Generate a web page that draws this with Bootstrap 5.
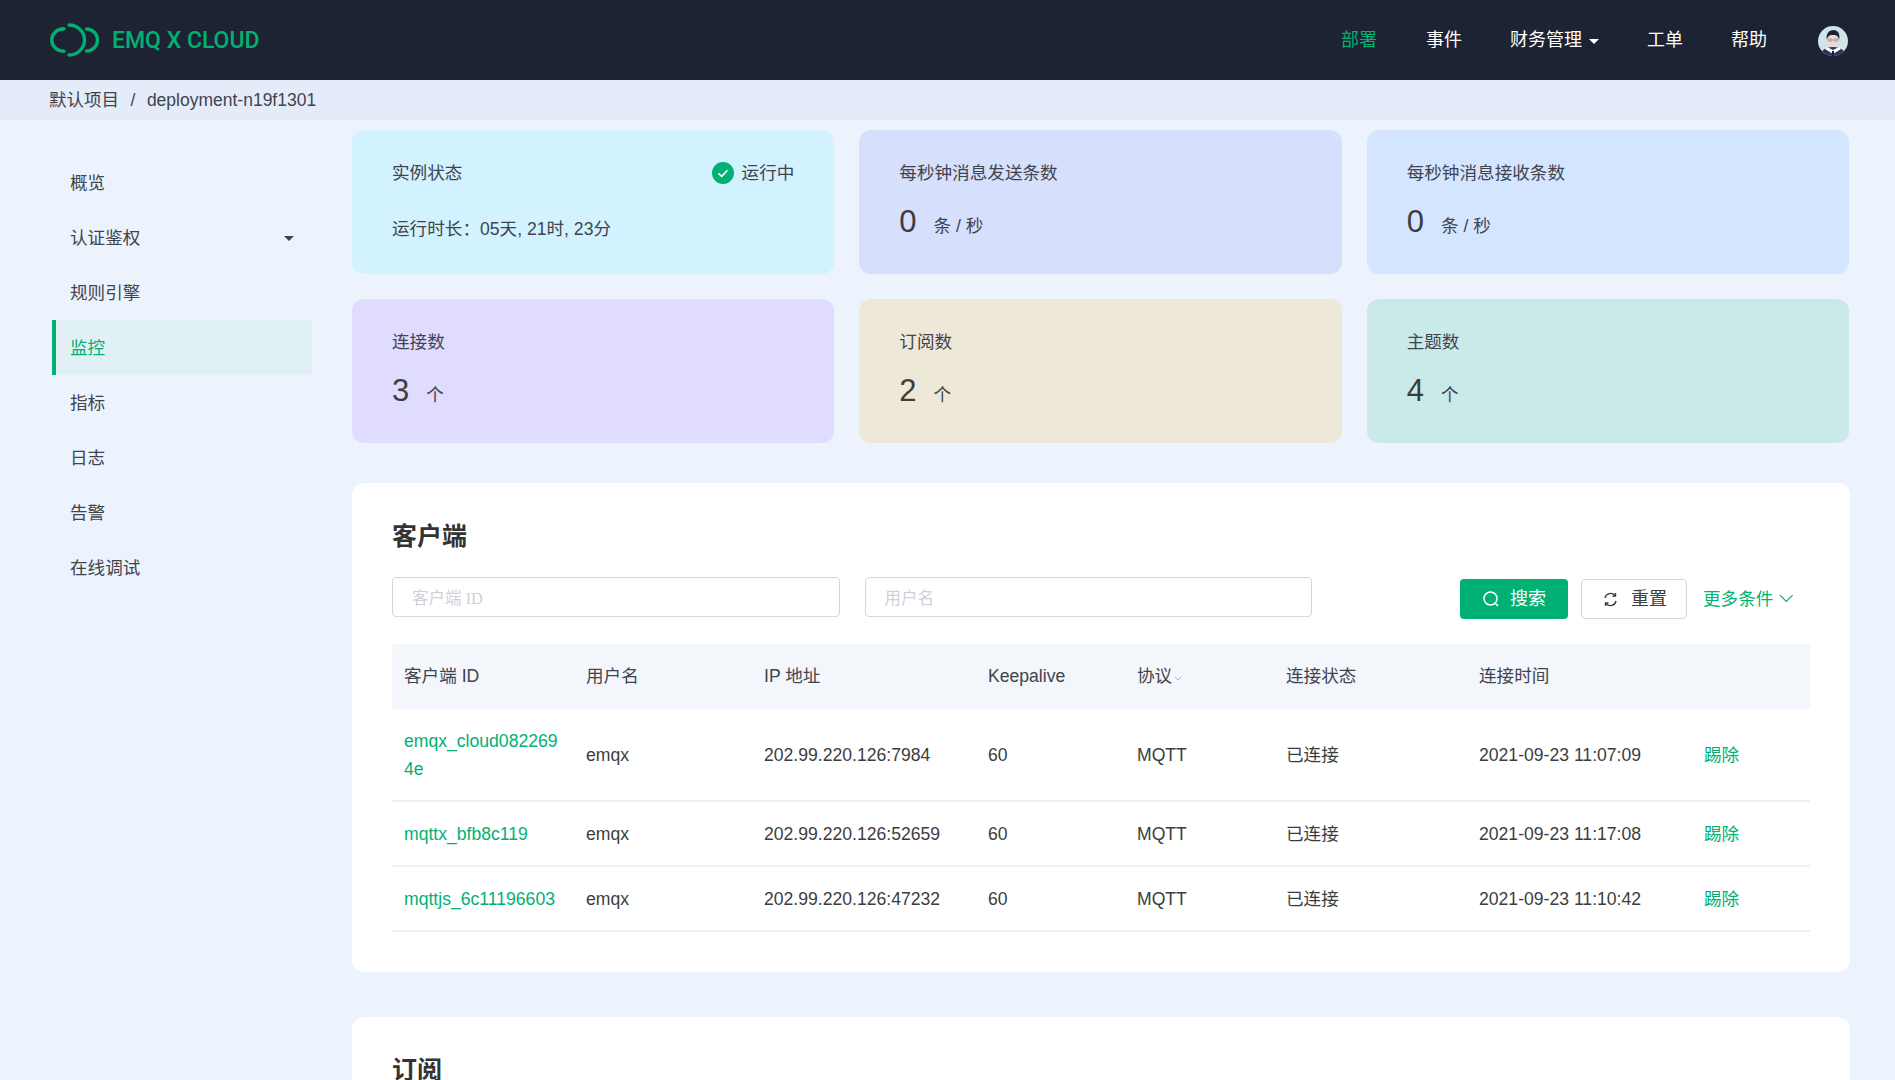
<!DOCTYPE html>
<html lang="zh-CN">
<head>
<meta charset="utf-8">
<title>EMQ X Cloud</title>
<link href="https://cdn.jsdelivr.net/npm/bootstrap@5.3.0/dist/css/bootstrap.min.css" rel="stylesheet">
<style>
html,body{height:1080px;overflow:hidden}
body{background:#ecf3fc;font-family:"Liberation Sans","Noto Sans CJK SC",sans-serif;font-size:17.6px;color:#3d3d3d;line-height:1.5}
.topbar{height:80px;background:#1d2333;padding:0 47px 0 50px}
.brandname{color:#00b173;font-family:Roboto,"Liberation Sans",sans-serif;font-size:23px;font-weight:500;margin:2px 0 0 13px}
.topnav{gap:48px;color:#fff;font-size:18px}
.topnav .on{color:#00b173;margin-right:1px}
.topnav .userpic{margin-left:3px;margin-top:2px}
.caretdown{display:inline-block;width:0;height:0;border-left:5px solid transparent;border-right:5px solid transparent;border-top:5px solid #fff;margin-left:7px;vertical-align:2px}
.crumbbar{height:40px;background:#e4ebf9;padding:0 49px;color:#40444f;font-size:17.5px}
.crumbbar .sep{margin:0 11.5px}
.sidemenu{width:352px;flex:none;padding:35px 40px 0 52px}
.sideitem{height:55px;padding:2px 0 0 18px;color:#40444f;display:flex;align-items:center;justify-content:space-between}
.sideitem.on{background:#e1f0f5;color:#00b173;border-left:4px solid #00b173;padding-left:14px}
.sidecaret{display:inline-block;width:0;height:0;border-left:5px solid transparent;border-right:5px solid transparent;border-top:5px solid #40444f;margin-right:18px}
.mainarea{width:1498px;flex:none;padding-top:10px}
.statgrid{display:grid;grid-template-columns:repeat(3,1fr);gap:25px;width:1497px}
.statbox{height:144px;border-radius:12px;padding:28px 40px 0}
.statlabel{color:#40444f;line-height:30px}
.runtime{margin-top:26px}
.bignum{font-size:31px;line-height:40px;color:#3d3d3d}
.numrow{margin-top:14px;display:flex;align-items:baseline}
.unit{margin-left:17px;color:#40444f}
.bg-a{background:#d3f2ff}.bg-b{background:#d6dffb}.bg-c{background:#d4e6ff}.bg-d{background:#e0dcff}.bg-e{background:#eee8d8}.bg-f{background:#caeae9}
.whitepanel{background:#fff;border-radius:12px;padding:0 40px;margin-top:40px}
.clientpanel{height:489px}
.subpanel{margin-top:45px;height:200px}
.paneltitle{font-size:25px;font-weight:700;color:#333;padding-top:33px;line-height:40px;margin:0}
.filterbar{margin-top:21px;height:40px}
.field{width:447.5px;height:40px;border:1px solid #d6d8e0;border-radius:4px;padding:4px 19px 0;font-family:"Liberation Serif","Noto Sans CJK SC",serif;font-size:16.5px;color:#cfd1d7;margin-right:25px;display:flex;align-items:center}
.filtertools{margin-left:auto;margin-top:4px}
.btn-find,.btn-clear{height:40px;border-radius:4px;font-size:18px;display:inline-flex;align-items:center;justify-content:center;padding:0;line-height:1}
.btn-find{width:108px;background:#00b173;color:#fff;border:0;gap:10px}
.btn-clear{width:106px;background:#fff;color:#3d3d3d;border:1px solid #d6d8e0;gap:13px;margin-left:13px;padding-left:2px}
.morelink{color:#00b173;margin:0 16px;width:91px;white-space:nowrap;display:flex;align-items:center;gap:6px}
.clients{width:100%;table-layout:fixed;margin-top:27px;border-collapse:separate;border-spacing:0;color:#3d3d3d}
.clients th{background:#f3f6fb;font-weight:400;height:65px;padding:0 0 0 12px;color:#40444f}
.clients th:first-child{border-radius:4px 0 0 4px}.clients th:last-child{border-radius:0 4px 4px 0}
.clients td{height:65px;padding:0 12px;border-bottom:2px solid #f0f1f6;line-height:28px;word-break:break-all}
.clients td.idc{color:#00b173;padding-right:8px}
.clients td.act{color:#00b173}
.clients td.tall{height:93px}
.subcaret{margin-left:2px;vertical-align:0}
</style>
</head>
<body>
<header class="topbar d-flex align-items-center justify-content-between">
  <div class="d-flex align-items-center">
    <svg width="49" height="34" viewBox="0 0 49 34" fill="none" stroke="#00b173" stroke-width="3.4" stroke-linecap="round"><path d="M14 5.700A12.300 11.300 0 0 0 14 28.300"/><path d="M19 2A15.500 15 0 0 1 19 32"/><path d="M36.500 6A11 11 0 0 1 36.500 28"/></svg>
    <span class="brandname">EMQ X CLOUD</span>
  </div>
  <nav class="topnav d-flex align-items-center">
    <span class="on">部署</span><span>事件</span><span>财务管理<i class="caretdown"></i></span><span>工单</span><span>帮助</span>
    <svg class="userpic" width="30" height="30" viewBox="0 0 30 30"><defs><clipPath id="av"><circle cx="15" cy="15" r="15"/></clipPath></defs><g clip-path="url(#av)"><rect width="30" height="30" fill="#cfe3e9"/><path d="M2 30c1-6 6-9 13-9s12 3 13 9z" fill="#26375f"/><path d="M9 21l6 3 6-3 2 2-7 4.500h-2L7 23z" fill="#fff"/><path d="M14 25h2l.5 5h-3z" fill="#14203a"/><ellipse cx="15" cy="14" rx="5.500" ry="7" fill="#efd8d4"/><path d="M9 14c-1.500-6 2-10 6.500-10S22.500 8 21 14c-.5-3-1.500-5-6-5s-5.500 2-6 5z" fill="#1c2433"/><path d="M10.500 13h3.500v2h-3.500zM16 13h3.500v2H16z" fill="none" stroke="#6a7488" stroke-width=".6"/></g></svg>
  </nav>
</header>
<div class="crumbbar d-flex align-items-center"><span>默认项目</span><span class="sep">/</span><span>deployment-n19f1301</span></div>
<div class="d-flex">
  <aside class="sidemenu">
    <div class="sideitem">概览</div>
    <div class="sideitem">认证鉴权<i class="sidecaret"></i></div>
    <div class="sideitem">规则引擎</div>
    <div class="sideitem on">监控</div>
    <div class="sideitem">指标</div>
    <div class="sideitem">日志</div>
    <div class="sideitem">告警</div>
    <div class="sideitem">在线调试</div>
  </aside>
  <main class="mainarea">
    <div class="statgrid">
      <div class="statbox bg-a">
        <div class="d-flex justify-content-between align-items-center"><span class="statlabel">实例状态</span>
          <span class="d-flex align-items-center gap-2 statlabel"><svg width="22" height="22" viewBox="0 0 22 22"><circle cx="11" cy="11" r="11" fill="#00b173"/><path d="M6.500 11.300l3.200 3 5.800-6" fill="none" stroke="#fff" stroke-width="1.600"/></svg>运行中</span></div>
        <div class="statlabel runtime">运行时长：05天, 21时, 23分</div>
      </div>
      <div class="statbox bg-b"><div class="statlabel">每秒钟消息发送条数</div><div class="numrow"><span class="bignum">0</span><span class="unit">条 / 秒</span></div></div>
      <div class="statbox bg-c"><div class="statlabel">每秒钟消息接收条数</div><div class="numrow"><span class="bignum">0</span><span class="unit">条 / 秒</span></div></div>
      <div class="statbox bg-d"><div class="statlabel">连接数</div><div class="numrow"><span class="bignum">3</span><span class="unit">个</span></div></div>
      <div class="statbox bg-e"><div class="statlabel">订阅数</div><div class="numrow"><span class="bignum">2</span><span class="unit">个</span></div></div>
      <div class="statbox bg-f"><div class="statlabel">主题数</div><div class="numrow"><span class="bignum">4</span><span class="unit">个</span></div></div>
    </div>
    <section class="whitepanel clientpanel">
      <h2 class="paneltitle">客户端</h2>
      <div class="filterbar d-flex align-items-center">
        <div class="field">客户端 ID</div><div class="field">用户名</div>
        <span class="filtertools d-flex align-items-center">
          <button class="btn-find" type="button"><svg width="18" height="18" viewBox="0 0 18 18" fill="none" stroke="#fff" stroke-width="1.500"><circle cx="8.500" cy="8.500" r="6.500"/><path d="M13 13l3 3"/></svg>搜索</button>
          <button class="btn-clear" type="button"><svg width="15" height="15" viewBox="0 0 15 15" fill="none" stroke="#3d3d3d" stroke-width="1.400"><path d="M2 6a5.700 5.700 0 0 1 10-2.500"/><path d="M13 9a5.700 5.700 0 0 1-10 2.500"/><path d="M12.500 1v3h-3M2.500 14v-3h3"/></svg>重置</button>
          <span class="morelink">更多条件<svg width="15" height="9" viewBox="0 0 15 9" fill="none" stroke="#00b173" stroke-width="1.200"><path d="M1 1l6.500 6.500L14 1"/></svg></span>
        </span>
      </div>
      <table class="clients">
        <colgroup><col style="width:182px"><col style="width:178px"><col style="width:224px"><col style="width:149px"><col style="width:149px"><col style="width:193px"><col style="width:225px"><col></colgroup>
        <thead><tr><th>客户端 ID</th><th>用户名</th><th>IP 地址</th><th>Keepalive</th><th>协议<svg class="subcaret" width="8" height="6" viewBox="0 0 8 6" fill="none" stroke="#b5b8c0"><path d="M1 1l3 3 3-3"/></svg></th><th>连接状态</th><th>连接时间</th><th></th></tr></thead>
        <tbody>
          <tr><td class="idc tall">emqx_cloud0822694e</td><td>emqx</td><td>202.99.220.126:7984</td><td>60</td><td>MQTT</td><td>已连接</td><td>2021-09-23 11:07:09</td><td class="act">踢除</td></tr>
          <tr><td class="idc">mqttx_bfb8c119</td><td>emqx</td><td>202.99.220.126:52659</td><td>60</td><td>MQTT</td><td>已连接</td><td>2021-09-23 11:17:08</td><td class="act">踢除</td></tr>
          <tr><td class="idc">mqttjs_6c11196603</td><td>emqx</td><td>202.99.220.126:47232</td><td>60</td><td>MQTT</td><td>已连接</td><td>2021-09-23 11:10:42</td><td class="act">踢除</td></tr>
        </tbody>
      </table>
    </section>
    <section class="whitepanel subpanel"><h2 class="paneltitle">订阅</h2></section>
  </main>
</div>
<script src="https://cdn.jsdelivr.net/npm/bootstrap@5.3.0/dist/js/bootstrap.bundle.min.js"></script>
</body>
</html>
